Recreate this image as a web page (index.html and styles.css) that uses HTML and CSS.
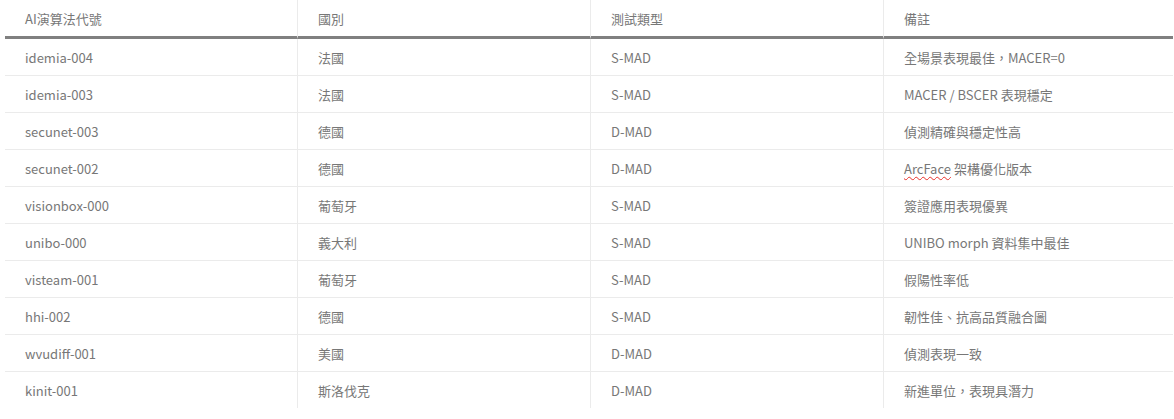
FILE: index.html
```html
<!DOCTYPE html>
<html lang="zh-Hant">
<head>
<meta charset="utf-8">
<link rel="stylesheet" href="styles.css">
</head>
<body>
<div class="wrap">
<table class="data">
  <colgroup>
    <col class="c1"><col class="c2"><col class="c3"><col class="c4">
  </colgroup>
  <thead>
    <tr><th>AI演算法代號</th><th>國別</th><th>測試類型</th><th>備註</th></tr>
  </thead>
  <tbody>
    <tr><td>idemia-004</td><td>法國</td><td>S-MAD</td><td>全場景表現最佳，MACER=0</td></tr>
    <tr><td>idemia-003</td><td>法國</td><td>S-MAD</td><td>MACER / BSCER 表現穩定</td></tr>
    <tr><td>secunet-003</td><td>德國</td><td>D-MAD</td><td>偵測精確與穩定性高</td></tr>
    <tr><td>secunet-002</td><td>德國</td><td>D-MAD</td><td><span class="spell">ArcFace</span> 架構優化版本</td></tr>
    <tr><td>visionbox-000</td><td>葡萄牙</td><td>S-MAD</td><td>簽證應用表現優異</td></tr>
    <tr><td>unibo-000</td><td>義大利</td><td>S-MAD</td><td>UNIBO morph 資料集中最佳</td></tr>
    <tr><td>visteam-001</td><td>葡萄牙</td><td>S-MAD</td><td>假陽性率低</td></tr>
    <tr><td>hhi-002</td><td>德國</td><td>S-MAD</td><td>韌性佳、抗高品質融合圖</td></tr>
    <tr><td>wvudiff-001</td><td>美國</td><td>D-MAD</td><td>偵測表現一致</td></tr>
    <tr class="last"><td>kinit-001</td><td>斯洛伐克</td><td>D-MAD</td><td>新進單位，表現具潛力</td></tr>
  </tbody>
</table>
</div>
</body>
</html>
```

FILE: styles.css
```css
html, body {
  margin: 0;
  padding: 0;
  background: #ffffff;
}
.wrap {
  padding-left: 5px;
}
.data {
  width: 1168px;
  table-layout: fixed;
  border-collapse: separate;
  border-spacing: 0;
  font-family: "Noto Sans CJK TC", "Noto Sans", sans-serif;
  font-size: 13px;
  color: #777777;
}
.c1 { width: 292px; }
.c2 { width: 293px; }
.c3 { width: 293px; }
.c4 { width: 290px; }
.data th, .data td {
  box-sizing: border-box;
  text-align: left;
  font-weight: normal;
  padding: 0 20px;
  white-space: nowrap;
  vertical-align: middle;
}
.data th {
  height: 39px;
  border-bottom: 3px solid #808080;
}
.data td {
  height: 37px;
  border-bottom: 1px solid #ebebeb;
}
.data tr.last td {
  border-bottom: none;
  height: 36px;
}
.data th + th, .data td + td {
  border-left: 1px solid #ebebeb;
}
.spell {
  text-decoration: underline wavy #e8302a;
  text-decoration-thickness: 1px;
  text-underline-offset: 2px;
}
```
